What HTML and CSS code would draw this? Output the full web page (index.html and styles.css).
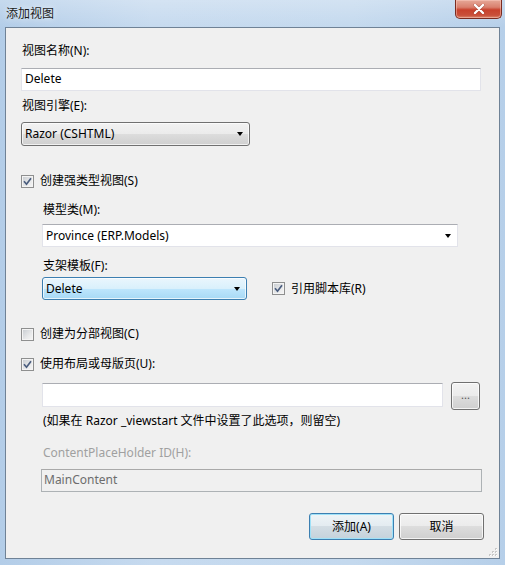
FILE: index.html
```html
<!DOCTYPE html>
<html lang="zh">
<head>
<meta charset="utf-8">
<title>添加视图</title>
<link rel="stylesheet" href="styles.css">
</head>
<body>
<div class="window">
  <div class="titlebar">
    <span class="title">添加视图</span>
    <span class="close">
      <svg width="14" height="10" viewBox="0 0 14 10"><path d="M3 1 L11 9 M11 1 L3 9" stroke="#6b1a10" stroke-width="3.4" stroke-linecap="round" opacity="0.35"/><path d="M3 1 L11 9 M11 1 L3 9" stroke="#fff" stroke-width="2.4" stroke-linecap="round"/></svg>
    </span>
  </div>
  <div class="client">
    <div class="content">
      <div class="label l1">视图名称(N):</div>
      <div class="textbox tb1">Delete</div>
      <div class="label l2">视图引擎(E):</div>
      <div class="combo razor"><span>Razor (CSHTML)</span><span class="arrow"></span></div>
      <div class="check c1"><span class="cb"><svg width="9" height="9" viewBox="0 0 9 9"><path d="M1 4.3 L3.5 7.2 L8 1.2" fill="none" stroke="#4a5d7e" stroke-width="1.7"/></svg></span><span>创建强类型视图(S)</span></div>
      <div class="indent">
        <div class="label l3">模型类(M):</div>
        <div class="textbox combo-edit"><span>Province (ERP.Models)</span><span class="arrow"></span></div>
        <div class="label l4">支架模板(F):</div>
        <div class="row scaffold">
          <div class="combo hover"><span>Delete</span><span class="arrow"></span></div>
          <div class="check"><span class="cb"><svg width="9" height="9" viewBox="0 0 9 9"><path d="M1 4.3 L3.5 7.2 L8 1.2" fill="none" stroke="#4a5d7e" stroke-width="1.7"/></svg></span><span>引用脚本库(R)</span></div>
        </div>
      </div>
      <div class="check c2"><span class="cb"></span><span>创建为分部视图(C)</span></div>
      <div class="check c3"><span class="cb"><svg width="9" height="9" viewBox="0 0 9 9"><path d="M1 4.3 L3.5 7.2 L8 1.2" fill="none" stroke="#4a5d7e" stroke-width="1.7"/></svg></span><span>使用布局或母版页(U):</span></div>
      <div class="indent">
        <div class="row layout">
          <div class="textbox tb-layout"></div>
          <div class="button small">...</div>
        </div>
        <div class="label note">(如果在 Razor _viewstart 文件中设置了此选项，则留空)</div>
        <div class="label disabled-label">ContentPlaceHolder ID(H):</div>
        <div class="textbox disabled">MainContent</div>
      </div>
      <div class="buttons">
        <div class="button default">添加(A)</div>
        <div class="button">取消</div>
      </div>
    </div>
    <div class="grip">
      <svg width="10" height="10" viewBox="0 0 10 10">
        <g fill="#c8c8c8"><rect x="7" y="1" width="2" height="2"/><rect x="4" y="4" width="2" height="2"/><rect x="7" y="4" width="2" height="2"/><rect x="1" y="7" width="2" height="2"/><rect x="4" y="7" width="2" height="2"/><rect x="7" y="7" width="2" height="2"/></g>
        <g fill="#ffffff"><rect x="8" y="2" width="1" height="1"/><rect x="5" y="5" width="1" height="1"/><rect x="8" y="5" width="1" height="1"/><rect x="2" y="8" width="1" height="1"/><rect x="5" y="8" width="1" height="1"/><rect x="8" y="8" width="1" height="1"/></g>
      </svg>
    </div>
  </div>
</div>
</body>
</html>
```

FILE: styles.css
```css
* { box-sizing: border-box; }
html, body {
  margin: 0;
  padding: 0;
  width: 505px;
  height: 565px;
  overflow: hidden;
}
body {
  font-family: "Noto Sans", "Noto Sans CJK SC", sans-serif;
  font-size: 12px;
  line-height: 16px;
  color: #000;
}
.window {
  width: 505px;
  height: 565px;
  background: linear-gradient(to right, #b3cde8 0%, #c6daef 30%, #c4d9ee 70%, #b6cfe9 100%);
  display: flex;
  flex-direction: column;
}
.titlebar {
  height: 27px;
  display: flex;
  justify-content: space-between;
  align-items: flex-start;
  background: linear-gradient(to bottom, rgba(255,255,255,0.25), rgba(255,255,255,0));
}
.title {
  margin-top: 5px;
  margin-left: 6px;
  font-family: "Noto Sans CJK SC", sans-serif;
  font-size: 12px;
  line-height: 16px;
  color: #1a1a1a;
  text-shadow: 0 0 6px rgba(255,255,255,0.9);
}
.close {
  width: 47px;
  height: 19px;
  margin-right: 3px;
  border: 1px solid #7a2b20;
  border-top: none;
  border-radius: 0 0 5px 5px;
  background: linear-gradient(to bottom, #e6a898 0%, #d9806e 40%, #c8412c 55%, #c9503a 85%, #dc8a6e 100%);
  box-shadow: inset 0 0 0 1px rgba(255,210,200,0.45);
  display: flex;
  align-items: center;
  justify-content: center;
}
.client {
  margin-left: 5px;
  width: 495px;
  height: 532px;
  border: 1px solid #6f8296;
  background: #f0f0f0;
  position: relative;
}
.content {
  padding: 15px 18px 0 15px;
  display: flex;
  flex-direction: column;
}
.label {
  height: 16px;
  padding-left: 1px;
  white-space: nowrap;
  font-family: "Noto Sans", "Noto Sans CJK SC", sans-serif;
}
.l2 { margin-top: 7px; }
.textbox {
  height: 23px;
  background: #fff;
  border: 1px solid #e2e3ea;
  border-top-color: #abadb3;
  padding: 2px 3px;
  white-space: nowrap;
}
.tb1 { margin-top: 9px; width: 460px; }
.combo {
  height: 24px;
  border: 1px solid #707070;
  border-radius: 3px;
  background: linear-gradient(to bottom, #f2f2f2 0%, #ebebeb 50%, #dddddd 50%, #cfcfcf 100%);
  box-shadow: inset 0 0 0 1px rgba(255,255,255,0.7);
  display: flex;
  align-items: center;
  justify-content: space-between;
  padding: 0 5px 0 3px;
}
.razor { margin-top: 8px; width: 229px; }
.arrow {
  width: 0;
  height: 0;
  border-left: 3.5px solid transparent;
  border-right: 3.5px solid transparent;
  border-top: 4px solid #000;
  margin-right: 1px;
}
.check {
  display: flex;
  align-items: center;
  gap: 6px;
  height: 16px;
  white-space: nowrap;
}
.cb {
  width: 13px;
  height: 13px;
  border: 1px solid #8e8f8f;
  background: linear-gradient(135deg, #c6cbd0 0%, #e8e9ea 60%, #f6f6f6 100%);
  box-shadow: inset 0 0 0 1px #f4f4f4;
  display: flex;
  align-items: center;
  justify-content: center;
  flex: none;
}
.c1 { margin-top: 27px; }
.c2 { margin-top: 26px; }
.c3 { margin-top: 14px; }
.indent {
  padding-left: 21px;
  display: flex;
  flex-direction: column;
}
.l3 { margin-top: 13px; }
.combo-edit {
  margin-top: 6px;
  width: 416px;
  display: flex;
  align-items: center;
  justify-content: space-between;
  padding: 0 5px 0 3px;
}
.l4 { margin-top: 11px; }
.row {
  display: flex;
}
.scaffold {
  margin-top: 3px;
  align-items: center;
  gap: 25px;
}
.combo.hover {
  width: 205px;
  height: 23px;
  border-color: #3c7fb1;
  background: linear-gradient(to bottom, #eaf6fd 0%, #d9f0fc 50%, #bee6fd 50%, #a7d9f5 100%);
}
.layout {
  margin-top: 10px;
  align-items: flex-start;
  gap: 8px;
}
.tb-layout {
  margin-top: 1px;
  width: 401px;
  height: 24px;
}
.button {
  height: 27px;
  width: 85px;
  border: 1px solid #707070;
  border-radius: 3px;
  background: linear-gradient(to bottom, #f2f2f2 0%, #ebebeb 50%, #dddddd 50%, #cfcfcf 100%);
  box-shadow: inset 0 0 0 1px rgba(255,255,255,0.75);
  display: flex;
  align-items: center;
  justify-content: center;
  font-family: "Noto Sans", "Noto Sans CJK SC", sans-serif;
}
.button.small {
  width: 29px;
  height: 28px;
  color: #555;
  font-size: 11px;
  padding-bottom: 3px;
}
.note { margin-top: 3px; }
.disabled-label { margin-top: 16px; color: #a0a0a0; }
.textbox.disabled {
  margin-top: 8px;
  margin-left: -1px;
  width: 441px;
  background: #f0f0f0;
  border: 1px solid #adb2b5;
  border-top-color: #a9a9a9;
  color: #6d6d6d;
  padding-left: 2px;
}
.buttons {
  margin-top: 21px;
  margin-right: -3px;
  display: flex;
  justify-content: flex-end;
  gap: 5px;
}
.button.default {
  border-color: #3c7fb1;
  box-shadow: inset 0 0 0 1px #9fe1f8;
  background: linear-gradient(to bottom, #eef4f7 0%, #e3ebf0 50%, #d3dde4 50%, #c5d2db 100%);
}
.grip {
  position: absolute;
  right: 1px;
  bottom: 1px;
  width: 10px;
  height: 10px;
  display: flex;
}
```
